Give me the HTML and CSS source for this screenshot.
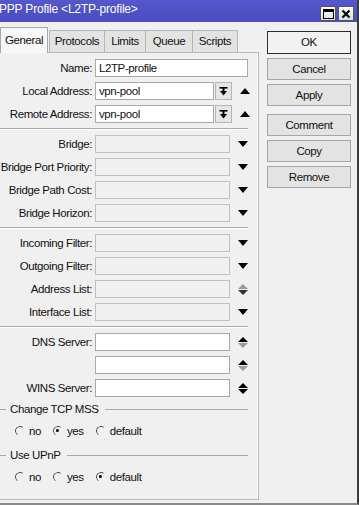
FILE: index.html
```html
<!DOCTYPE html>
<html lang="en">
<head>
  <meta charset="UTF-8">
  <title>PPP Profile &lt;L2TP-profile&gt;</title>
  <link rel="stylesheet" href="styles.css">
</head>
<body>
  <div class="window">
    <!-- TITLE BAR -->
    <div class="titlebar">
      <span class="title">PPP Profile &lt;L2TP-profile&gt;</span>
      <div class="tb-btns">
        <div class="tb-btn">
          <svg width="11" height="10" viewBox="0 0 11 10"><rect x="0.5" y="0.5" width="10" height="9" fill="none" stroke="#000"/><rect x="0" y="0" width="11" height="3" fill="#000"/></svg>
        </div>
        <div class="tb-btn">
          <svg width="10" height="10" viewBox="0 0 10 10"><path d="M1.5 1.5 L8.5 8.5 M8.5 1.5 L1.5 8.5" stroke="#000" stroke-width="2.2"/></svg>
        </div>
      </div>
    </div>

    <div class="content">
      <div class="main">
        <!-- TABS -->
        <div class="tabs">
          <div class="tab active">General</div>
          <div class="tab">Protocols</div>
          <div class="tab">Limits</div>
          <div class="tab">Queue</div>
          <div class="tab">Scripts</div>
        </div>

        <!-- PANEL -->
        <div class="panel">
          <div class="row">
            <div class="label">Name:</div>
            <div class="input wide">L2TP-profile</div>
          </div>
          <div class="row">
            <div class="label">Local Address:</div>
            <div class="input short">vpn-pool</div>
            <div class="mini-btn">
              <svg width="9" height="11" viewBox="0 0 9 11"><rect x="0.5" y="1" width="8" height="1.6" fill="#000"/><rect x="3.5" y="1" width="2" height="4" fill="#000"/><polygon points="1,5 8,5 4.5,9.5" fill="#000"/></svg>
            </div>
            <div class="arrow"><svg width="10" height="6" viewBox="0 0 10 6"><polygon points="0,6 10,6 5,0" fill="#000"/></svg></div>
          </div>
          <div class="row">
            <div class="label">Remote Address:</div>
            <div class="input short">vpn-pool</div>
            <div class="mini-btn">
              <svg width="9" height="11" viewBox="0 0 9 11"><rect x="0.5" y="1" width="8" height="1.6" fill="#000"/><rect x="3.5" y="1" width="2" height="4" fill="#000"/><polygon points="1,5 8,5 4.5,9.5" fill="#000"/></svg>
            </div>
            <div class="arrow"><svg width="10" height="6" viewBox="0 0 10 6"><polygon points="0,6 10,6 5,0" fill="#000"/></svg></div>
          </div>

          <div class="sep"></div>

          <div class="row">
            <div class="label">Bridge:</div>
            <div class="input off"></div>
            <div class="arrow"><svg width="10" height="6" viewBox="0 0 10 6"><polygon points="0,0 10,0 5,6" fill="#000"/></svg></div>
          </div>
          <div class="row">
            <div class="label">Bridge Port Priority:</div>
            <div class="input off"></div>
            <div class="arrow"><svg width="10" height="6" viewBox="0 0 10 6"><polygon points="0,0 10,0 5,6" fill="#000"/></svg></div>
          </div>
          <div class="row">
            <div class="label">Bridge Path Cost:</div>
            <div class="input off"></div>
            <div class="arrow"><svg width="10" height="6" viewBox="0 0 10 6"><polygon points="0,0 10,0 5,6" fill="#000"/></svg></div>
          </div>
          <div class="row">
            <div class="label">Bridge Horizon:</div>
            <div class="input off"></div>
            <div class="arrow"><svg width="10" height="6" viewBox="0 0 10 6"><polygon points="0,0 10,0 5,6" fill="#000"/></svg></div>
          </div>

          <div class="sep"></div>

          <div class="row">
            <div class="label">Incoming Filter:</div>
            <div class="input off"></div>
            <div class="arrow"><svg width="10" height="6" viewBox="0 0 10 6"><polygon points="0,0 10,0 5,6" fill="#000"/></svg></div>
          </div>
          <div class="row">
            <div class="label">Outgoing Filter:</div>
            <div class="input off"></div>
            <div class="arrow"><svg width="10" height="6" viewBox="0 0 10 6"><polygon points="0,0 10,0 5,6" fill="#000"/></svg></div>
          </div>
          <div class="row">
            <div class="label">Address List:</div>
            <div class="input off"></div>
            <div class="arrow"><svg width="10" height="11" viewBox="0 0 10 11"><polygon points="0,5 10,5 5,0" fill="#9a9a9a"/><polygon points="0,6 10,6 5,11" fill="#333"/></svg></div>
          </div>
          <div class="row">
            <div class="label">Interface List:</div>
            <div class="input off"></div>
            <div class="arrow"><svg width="10" height="6" viewBox="0 0 10 6"><polygon points="0,0 10,0 5,6" fill="#000"/></svg></div>
          </div>

          <div class="sep"></div>

          <div class="row">
            <div class="label">DNS Server:</div>
            <div class="input"></div>
            <div class="arrow"><svg width="10" height="11" viewBox="0 0 10 11"><polygon points="0,5 10,5 5,0" fill="#000"/><polygon points="0,6 10,6 5,11" fill="#9a9a9a"/></svg></div>
          </div>
          <div class="row">
            <div class="label"></div>
            <div class="input"></div>
            <div class="arrow"><svg width="10" height="11" viewBox="0 0 10 11"><polygon points="0,5 10,5 5,0" fill="#000"/><polygon points="0,6 10,6 5,11" fill="#9a9a9a"/></svg></div>
          </div>
          <div class="row">
            <div class="label">WINS Server:</div>
            <div class="input"></div>
            <div class="arrow"><svg width="10" height="11" viewBox="0 0 10 11"><polygon points="0,5 10,5 5,0" fill="#000"/><polygon points="0,6 10,6 5,11" fill="#000"/></svg></div>
          </div>

          <div class="group">Change TCP MSS</div>
          <div class="radios">
            <span class="radio"><span class="dot"></span>no</span>
            <span class="radio checked"><span class="dot"></span>yes</span>
            <span class="radio"><span class="dot"></span>default</span>
          </div>

          <div class="group">Use UPnP</div>
          <div class="radios">
            <span class="radio"><span class="dot"></span>no</span>
            <span class="radio"><span class="dot"></span>yes</span>
            <span class="radio checked"><span class="dot"></span>default</span>
          </div>
        </div>
      </div>

      <!-- SIDE BUTTONS -->
      <div class="side">
        <div class="btn default">OK</div>
        <div class="btn">Cancel</div>
        <div class="btn">Apply</div>
        <div class="btn spaced">Comment</div>
        <div class="btn">Copy</div>
        <div class="btn">Remove</div>
      </div>
    </div>
  </div>
</body>
</html>
```

FILE: styles.css
```css
* {
  margin: 0;
  padding: 0;
  box-sizing: border-box;
}

body {
  font-family: "Liberation Sans", Arial, sans-serif;
  font-size: 11.5px;
  letter-spacing: -0.4px;
  color: #111;
  background: #f0f0f0;
  overflow: hidden;
}

.window {
  width: 359px;
  height: 505px;
  border-right: 2px solid #3c3c3c;
  border-bottom: 2px solid #8a8a8a;
  background: #f0f0f0;
}

/* TITLE BAR */
.titlebar {
  height: 22px;
  background: linear-gradient(#5557cd, #4a4cc2);
  color: #fff;
  display: flex;
  align-items: center;
  justify-content: space-between;
  padding-right: 3px;
}

.title {
  font-size: 12px;
  letter-spacing: -0.2px;
  margin-left: -1px;
  margin-top: -5px;
}

.tb-btns {
  display: flex;
  gap: 2px;
  margin-top: 5px;
}

.tb-btn {
  width: 16px;
  height: 15px;
  background: linear-gradient(#ffffff, #dcdcdc);
  border: 1px solid #555;
  display: flex;
  align-items: center;
  justify-content: center;
}

.content {
  display: flex;
}

.main {
  width: 259px;
}

/* TABS */
.tabs {
  display: flex;
  align-items: flex-end;
  height: 30px;
}

.tab {
  height: 22px;
  line-height: 21px;
  text-align: center;
  background: #e3e3e3;
  border: 1px solid #b5b5b5;
  border-bottom: none;
  margin-left: -1px;
  font-size: 11.5px;
}

.tab:nth-child(2) { width: 56px; }
.tab:nth-child(3) { width: 42px; }
.tab:nth-child(4) { width: 48px; }
.tab:nth-child(5) { width: 46px; }

.tab.active {
  width: 48px;
  height: 26px;
  line-height: 24px;
  background: #f7f7f7;
  margin-left: 0;
  margin-right: 2px;
  position: relative;
  z-index: 1;
  margin-bottom: -1px;
  border-color: #a8a8a8;
}

/* PANEL */
.panel {
  height: 448px;
  border: 1px solid #b9b9b9;
  border-left: none;
  background: #f0f0f0;
  padding-top: 6px;
  box-shadow: inset -1px 0 0 #fff;
}

.row {
  display: flex;
  align-items: center;
  height: 18px;
  margin-bottom: 5px;
}

.label {
  width: 95px;
  padding-right: 3px;
  text-align: right;
  white-space: nowrap;
  flex-shrink: 0;
}

.input {
  width: 135px;
  height: 18px;
  background: #fff;
  border: 1px solid #a9a9a9;
  padding: 1px 3px;
  line-height: 14px;
}

.input.wide {
  width: 153px;
}

.input.short {
  width: 119px;
}

.input.off {
  background: #f0f0f0;
  border-color: #c0c0c0;
}

.mini-btn {
  width: 17px;
  height: 18px;
  margin-left: 1px;
  background: #e6e6e6;
  border: 1px solid #b5b5b5;
  display: flex;
  align-items: center;
  justify-content: center;
}

.arrow {
  width: 24px;
  display: flex;
  justify-content: center;
  padding-left: 1px;
}

.sep {
  height: 2px;
  margin: 1px 10px 5px 0;
  border-top: 1px solid #a9a9a9;
  border-bottom: 1px solid #fff;
}

/* GROUPS */
.group {
  display: flex;
  align-items: center;
  gap: 4px;
  height: 14px;
  margin-top: 4px;
  padding-right: 10px;
}

.group::before {
  content: "";
  width: 6px;
  border-top: 1px solid #a9a9a9;
}

.group::after {
  content: "";
  flex: 1;
  border-top: 1px solid #a9a9a9;
  margin-left: 2px;
}

.radios {
  display: flex;
  align-items: center;
  height: 16px;
  margin: 7px 0 9px 15px;
}

.radio {
  display: flex;
  align-items: center;
  margin-right: 12px;
}

.dot {
  width: 10px;
  height: 10px;
  border-radius: 50%;
  border: 1.5px solid transparent;
  border-top-color: #444;
  border-left-color: #444;
  transform: rotate(-10deg);
  margin-right: 4px;
  position: relative;
}

.radio.checked .dot::after {
  content: "";
  position: absolute;
  left: 2px;
  top: 2px;
  width: 3px;
  height: 3px;
  border-radius: 50%;
  background: #000;
}

/* SIDE BUTTONS */
.side {
  margin-left: 8px;
  padding-top: 9px;
  width: 84px;
  display: flex;
  flex-direction: column;
  gap: 4px;
}

.btn {
  height: 22px;
  line-height: 20px;
  text-align: center;
  background: #e3e3e3;
  border: 1px solid #a6a6a6;
}

.btn.default {
  height: 23px;
  border: 1px solid #2a2a2a;
  box-shadow: inset 0 0 0 1px #f4f4f4;
  background: #f2f2f2;
}

.btn.spaced {
  margin-top: 4px;
}
```
